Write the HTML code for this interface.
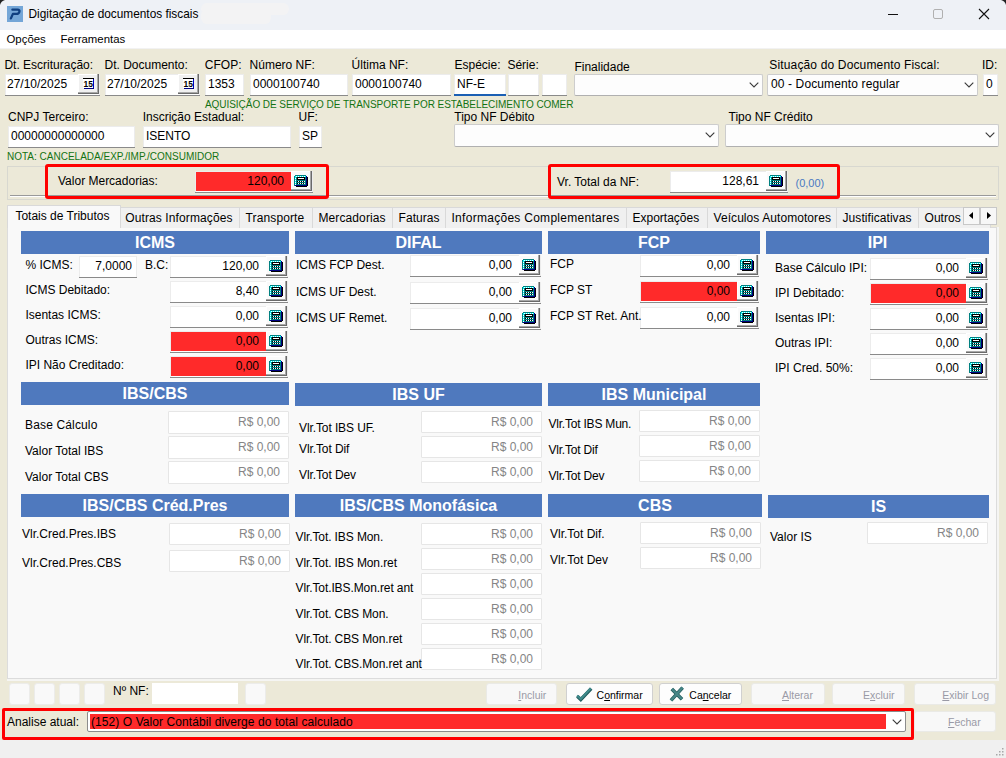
<!DOCTYPE html><html><head><meta charset="utf-8"><style>
html,body{margin:0;padding:0;}
body{width:1006px;height:758px;position:relative;overflow:hidden;background:#ece9d8;font-family:"Liberation Sans", sans-serif;}
.t{position:absolute;white-space:nowrap;line-height:1;z-index:2;}
.b{position:absolute;box-sizing:border-box;}
</style></head><body>
<div class="b" style="left:0px;top:0px;width:1006px;height:30px;background:#eef1f6;"></div>
<svg width="16" height="16" viewBox="0 0 16 16" style="position:absolute;left:7px;top:6px"><rect width="16" height="16" fill="#74a6d7"/><path d="M5.4 3.7 L10.6 3.7 Q12.9 3.7 12.4 5.7 Q11.9 7.9 9.5 7.9 L5.9 7.9 L3.9 12.4" fill="none" stroke="#0f3f80" stroke-width="2.3" stroke-linecap="round" stroke-linejoin="round"/></svg>
<div class="t" style="left:28.5px;top:8.97px;font-size:11.85px;color:#000;">Digitação de documentos fiscais</div>
<div class="b" style="left:201px;top:3px;width:88px;height:12px;background:#f3f3f4;border-radius:6px;filter:blur(0.6px);"></div>
<div class="b" style="left:201px;top:9px;width:70px;height:15px;background:#f3f3f4;border-radius:6px;filter:blur(0.6px);"></div>
<svg width="6" height="6" style="position:absolute;left:1000px;top:0"><path d="M1 0 L6 0 L6 5 Q5 1 1 0Z" fill="#222"/></svg>
<svg width="6" height="6" style="position:absolute;left:0;top:0"><path d="M5 0 L0 0 L0 5 Q1 1 5 0Z" fill="#222"/></svg>
<div class="b" style="left:888px;top:14px;width:10px;height:1px;background:#111;"></div>
<div class="b" style="left:933px;top:9px;width:10px;height:10px;border:1px solid #b0b0b0;border-radius:2px;"></div>
<svg width="12" height="12" viewBox="0 0 12 12" style="position:absolute;left:978px;top:8px"><path d="M1 1 L11 11 M11 1 L1 11" stroke="#111" stroke-width="1.1"/></svg>
<div class="b" style="left:0px;top:30px;width:1006px;height:18px;background:#fff;"></div>
<div class="b" style="left:0px;top:48px;width:1006px;height:1px;background:#f2f2f2;"></div>
<div class="t" style="left:6.5px;top:34.35px;font-size:11.4px;color:#000;">Opções</div>
<div class="t" style="left:60.6px;top:34.35px;font-size:11.4px;color:#000;">Ferramentas</div>
<div class="b" style="left:0px;top:740px;width:1006px;height:18px;background:#f0f0f0;"></div>
<svg width="8" height="8" viewBox="0 0 8 8" style="position:absolute;left:996px;top:748px"><g fill="#a8a8a8"><rect x="6" y="0" width="1.5" height="1.5"/><rect x="3" y="3" width="1.5" height="1.5"/><rect x="6" y="3" width="1.5" height="1.5"/><rect x="0" y="6" width="1.5" height="1.5"/><rect x="3" y="6" width="1.5" height="1.5"/><rect x="6" y="6" width="1.5" height="1.5"/></g></svg>
<div class="t" style="left:4.4px;top:58.84px;font-size:12px;color:#000;">Dt. Escrituração:</div>
<div class="t" style="left:104.5px;top:58.84px;font-size:12px;color:#000;">Dt. Documento:</div>
<div class="t" style="left:204.8px;top:58.84px;font-size:12px;color:#000;">CFOP:</div>
<div class="t" style="left:249.6px;top:58.84px;font-size:12px;color:#000;">Número NF:</div>
<div class="t" style="left:351.6px;top:58.84px;font-size:12px;color:#000;">Última NF:</div>
<div class="t" style="left:454.5px;top:58.84px;font-size:12px;color:#000;">Espécie:</div>
<div class="t" style="left:507.4px;top:58.84px;font-size:12px;color:#000;">Série:</div>
<div class="t" style="left:982px;top:58.84px;font-size:12px;color:#000;">ID:</div>
<div class="t" style="left:769.3px;top:58.84px;font-size:12px;color:#000;letter-spacing:0.15px">Situação do Documento Fiscal:</div>
<div class="t" style="left:574.4px;top:60.84px;font-size:12px;color:#000;">Finalidade</div>
<div class="b" style="left:5px;top:74px;width:95px;height:22px;background:#fff;box-shadow: inset 0 -1px 0 #8a8a8a, inset 0 1px 0 #ececec, inset 1px 0 0 #ececec, inset -1px 0 0 #ececec;"></div>
<div class="t" style="left:7px;top:77.84px;font-size:12px;color:#000;">27/10/2025</div>
<div class="b" style="left:78px;top:74px;width:21px;height:20px;background:#f0f0f0;box-shadow: inset -1px -1px 0 #6a6a6a, inset -2px -2px 0 #a8a8a8, inset 1px 1px 0 #fff;"></div>
<svg width="12" height="11" viewBox="0 0 12 11" shape-rendering="crispEdges" style="position:absolute;left:83px;top:78px"><rect x="0" y="1" width="11" height="9" fill="#fff"/><rect x="0" y="0" width="11" height="1" fill="#000"/><rect x="0" y="1" width="1" height="9" fill="#000" opacity="0.0"/><rect x="10" y="1" width="1" height="9" fill="#0000c0"/><rect x="1" y="10" width="10" height="1" fill="#000080"/>
<text x="5.2" y="8.6" font-family="Liberation Sans" font-size="8.5" font-weight="bold" text-anchor="middle" fill="#000" shape-rendering="auto">15</text></svg>
<div class="b" style="left:105px;top:74px;width:95px;height:22px;background:#fff;box-shadow: inset 0 -1px 0 #8a8a8a, inset 0 1px 0 #ececec, inset 1px 0 0 #ececec, inset -1px 0 0 #ececec;"></div>
<div class="t" style="left:107px;top:77.84px;font-size:12px;color:#000;">27/10/2025</div>
<div class="b" style="left:178px;top:74px;width:21px;height:20px;background:#f0f0f0;box-shadow: inset -1px -1px 0 #6a6a6a, inset -2px -2px 0 #a8a8a8, inset 1px 1px 0 #fff;"></div>
<svg width="12" height="11" viewBox="0 0 12 11" shape-rendering="crispEdges" style="position:absolute;left:183px;top:78px"><rect x="0" y="1" width="11" height="9" fill="#fff"/><rect x="0" y="0" width="11" height="1" fill="#000"/><rect x="0" y="1" width="1" height="9" fill="#000" opacity="0.0"/><rect x="10" y="1" width="1" height="9" fill="#0000c0"/><rect x="1" y="10" width="10" height="1" fill="#000080"/>
<text x="5.2" y="8.6" font-family="Liberation Sans" font-size="8.5" font-weight="bold" text-anchor="middle" fill="#000" shape-rendering="auto">15</text></svg>
<div class="b" style="left:205px;top:74px;width:39px;height:22px;background:#fff;box-shadow: inset 0 -1px 0 #8a8a8a, inset 0 1px 0 #ececec, inset 1px 0 0 #ececec, inset -1px 0 0 #ececec;"></div>
<div class="t" style="left:208px;top:77.84px;font-size:12px;color:#000;">1353</div>
<div class="b" style="left:250px;top:74px;width:98px;height:22px;background:#fff;box-shadow: inset 0 -1px 0 #8a8a8a, inset 0 1px 0 #ececec, inset 1px 0 0 #ececec, inset -1px 0 0 #ececec;"></div>
<div class="t" style="left:253px;top:77.84px;font-size:12px;color:#000;">0000100740</div>
<div class="b" style="left:352px;top:74px;width:99px;height:22px;background:#fff;box-shadow: inset 0 -1px 0 #8a8a8a, inset 0 1px 0 #ececec, inset 1px 0 0 #ececec, inset -1px 0 0 #ececec;"></div>
<div class="t" style="left:355px;top:77.84px;font-size:12px;color:#000;">0000100740</div>
<div class="b" style="left:454px;top:74px;width:52px;height:22px;background:#fff;box-shadow: inset 0 -1px 0 #8a8a8a, inset 0 1px 0 #ececec, inset 1px 0 0 #ececec, inset -1px 0 0 #ececec;"></div>
<div class="t" style="left:457px;top:77.84px;font-size:12px;color:#000;">NF-E</div>
<div class="b" style="left:454px;top:94px;width:52px;height:2px;background:#1a5fb4;"></div>
<div class="b" style="left:508px;top:74px;width:31px;height:22px;background:#fff;box-shadow: inset 0 -1px 0 #8a8a8a, inset 0 1px 0 #ececec, inset 1px 0 0 #ececec, inset -1px 0 0 #ececec;"></div>
<div class="b" style="left:542px;top:74px;width:25px;height:22px;background:#fff;box-shadow: inset 0 -1px 0 #8a8a8a, inset 0 1px 0 #ececec, inset 1px 0 0 #ececec, inset -1px 0 0 #ececec;"></div>
<div class="b" style="left:574px;top:74px;width:189px;height:22px;background:#fdfdfd;border:1px solid #cdcdcd;border-bottom-color:#b0b0b0;border-radius:2px"></div>
<svg width="10" height="6" viewBox="0 0 10 6" style="position:absolute;left:749px;top:82px"><path d="M0.7 0.7 L5 5 L9.3 0.7" fill="none" stroke="#3a3a3a" stroke-width="1.1"/></svg>
<div class="b" style="left:767px;top:74px;width:211px;height:22px;background:#fdfdfd;border:1px solid #cdcdcd;border-bottom-color:#b0b0b0;border-radius:2px"></div>
<svg width="10" height="6" viewBox="0 0 10 6" style="position:absolute;left:964px;top:82px"><path d="M0.7 0.7 L5 5 L9.3 0.7" fill="none" stroke="#3a3a3a" stroke-width="1.1"/></svg>
<div class="t" style="left:771px;top:77.84px;font-size:12px;color:#000;letter-spacing:0.12px">00 - Documento regular</div>
<div class="b" style="left:983px;top:74px;width:15px;height:22px;background:#fff;box-shadow: inset 0 -1px 0 #8a8a8a, inset 0 1px 0 #ececec, inset 1px 0 0 #ececec, inset -1px 0 0 #ececec;"></div>
<div class="t" style="left:986px;top:77.84px;font-size:12px;color:#000;">0</div>
<div class="t" style="left:205px;top:99.94px;font-size:10px;color:#137313;letter-spacing:-0.05px">AQUISIÇÃO DE SERVIÇO DE TRANSPORTE POR ESTABELECIMENTO COMER</div>
<div class="t" style="left:8px;top:110.84px;font-size:12px;color:#000;">CNPJ Terceiro:</div>
<div class="t" style="left:142.7px;top:110.84px;font-size:12px;color:#000;">Inscrição Estadual:</div>
<div class="t" style="left:298.6px;top:110.84px;font-size:12px;color:#000;">UF:</div>
<div class="t" style="left:454.3px;top:110.84px;font-size:12px;color:#000;">Tipo NF Débito</div>
<div class="t" style="left:728.5px;top:110.84px;font-size:12px;color:#000;">Tipo NF Crédito</div>
<div class="b" style="left:8px;top:126px;width:127px;height:22px;background:#fff;box-shadow: inset 0 -1px 0 #8a8a8a, inset 0 1px 0 #ececec, inset 1px 0 0 #ececec, inset -1px 0 0 #ececec;"></div>
<div class="t" style="left:11px;top:129.84px;font-size:12px;color:#000;">00000000000000</div>
<div class="b" style="left:143px;top:126px;width:148px;height:22px;background:#fff;box-shadow: inset 0 -1px 0 #8a8a8a, inset 0 1px 0 #ececec, inset 1px 0 0 #ececec, inset -1px 0 0 #ececec;"></div>
<div class="t" style="left:146px;top:129.84px;font-size:12px;color:#000;">ISENTO</div>
<div class="b" style="left:299px;top:126px;width:23px;height:22px;background:#fff;box-shadow: inset 0 -1px 0 #8a8a8a, inset 0 1px 0 #ececec, inset 1px 0 0 #ececec, inset -1px 0 0 #ececec;"></div>
<div class="t" style="left:302px;top:129.84px;font-size:12px;color:#000;">SP</div>
<div class="b" style="left:454px;top:124px;width:265px;height:23px;background:#fdfdfd;border:1px solid #cdcdcd;border-bottom-color:#b0b0b0;border-radius:2px"></div>
<svg width="10" height="6" viewBox="0 0 10 6" style="position:absolute;left:705px;top:132px"><path d="M0.7 0.7 L5 5 L9.3 0.7" fill="none" stroke="#3a3a3a" stroke-width="1.1"/></svg>
<div class="b" style="left:725px;top:124px;width:274px;height:23px;background:#fdfdfd;border:1px solid #cdcdcd;border-bottom-color:#b0b0b0;border-radius:2px"></div>
<svg width="10" height="6" viewBox="0 0 10 6" style="position:absolute;left:985px;top:132px"><path d="M0.7 0.7 L5 5 L9.3 0.7" fill="none" stroke="#3a3a3a" stroke-width="1.1"/></svg>
<div class="t" style="left:7px;top:152.03px;font-size:10px;color:#137313;">NOTA: CANCELADA/EXP./IMP./CONSUMIDOR</div>
<div class="b" style="left:7px;top:166px;width:992px;height:34px;border:1px solid #d8d8d0;"></div>
<div class="b" style="left:10px;top:195px;width:986px;height:1px;background:#9a9a9a;"></div>
<div class="b" style="left:10px;top:196px;width:986px;height:1px;background:#fff;"></div>
<div class="b" style="left:45px;top:164px;width:284px;height:35px;border:3px solid #ff0000;border-radius:3px;"></div>
<div class="t" style="left:58px;top:174.84px;font-size:12px;color:#000;">Valor Mercadorias:</div>
<div class="b" style="left:195px;top:171px;width:118px;height:22px;background:#fff;box-shadow: inset 0 -1px 0 #8a8a8a, inset 0 1px 0 #ececec, inset 1px 0 0 #ececec, inset -1px 0 0 #ececec;"></div>
<div class="b" style="left:196px;top:172px;width:95px;height:19px;background:#ff2a2a;"></div>
<div class="b" style="left:291px;top:171px;width:21px;height:20px;background:#fafafa;box-shadow: inset -1px -1px 0 #6a6a6a, inset -2px -2px 0 #a8a8a8, inset 1px 1px 0 #fff;"></div>
<svg width="14" height="12" viewBox="0 0 14 12" shape-rendering="crispEdges" style="position:absolute;left:294px;top:175px">
<rect x="1" y="0" width="11" height="1" fill="#008080"/>
<rect x="0" y="1" width="1" height="10" fill="#008080"/>
<rect x="1" y="1" width="12" height="10" fill="#008080"/>
<rect x="12" y="1" width="1" height="10" fill="#000080"/><rect x="13" y="2" width="1" height="9" fill="#000"/>
<rect x="1" y="10" width="12" height="1" fill="#000080"/><rect x="2" y="11" width="11" height="1" fill="#000"/>
<g fill="#00ffff"><rect x="1" y="1" width="11" height="1"/><rect x="1" y="1" width="1" height="9"/></g>
<g fill="#fff"><rect x="2" y="1" width="1" height="1"/><rect x="4" y="1" width="1" height="1"/><rect x="6" y="1" width="1" height="1"/><rect x="8" y="1" width="1" height="1"/><rect x="10" y="1" width="1" height="1"/><rect x="1" y="3" width="1" height="1"/><rect x="1" y="5" width="1" height="1"/><rect x="1" y="7" width="1" height="1"/><rect x="1" y="9" width="1" height="1"/></g>
<rect x="3" y="2" width="8" height="3" fill="#000"/><rect x="4" y="3" width="6" height="1" fill="#fff"/>
<rect x="3" y="6" width="8" height="1" fill="#000"/><rect x="3" y="8" width="8" height="1" fill="#000"/>
<g fill="#fff"><rect x="4" y="6" width="1" height="1"/><rect x="6" y="6" width="1" height="1"/><rect x="8" y="6" width="1" height="1"/><rect x="10" y="6" width="1" height="1"/><rect x="4" y="8" width="1" height="1"/><rect x="6" y="8" width="1" height="1"/><rect x="8" y="8" width="1" height="1"/><rect x="10" y="8" width="1" height="1"/></g>
</svg>
<div class="t" style="right:722px;top:174.84px;font-size:12px;color:#000;">120,00</div>
<div class="b" style="left:548px;top:164px;width:292px;height:35px;border:3px solid #ff0000;border-radius:3px;"></div>
<div class="t" style="left:557px;top:175.84px;font-size:12px;color:#000;">Vr. Total da NF:</div>
<div class="b" style="left:670px;top:171px;width:118px;height:22px;background:#fff;box-shadow: inset 0 -1px 0 #8a8a8a, inset 0 1px 0 #ececec, inset 1px 0 0 #ececec, inset -1px 0 0 #ececec;"></div>
<div class="b" style="left:766px;top:171px;width:21px;height:20px;background:#fafafa;box-shadow: inset -1px -1px 0 #6a6a6a, inset -2px -2px 0 #a8a8a8, inset 1px 1px 0 #fff;"></div>
<svg width="14" height="12" viewBox="0 0 14 12" shape-rendering="crispEdges" style="position:absolute;left:769px;top:175px">
<rect x="1" y="0" width="11" height="1" fill="#008080"/>
<rect x="0" y="1" width="1" height="10" fill="#008080"/>
<rect x="1" y="1" width="12" height="10" fill="#008080"/>
<rect x="12" y="1" width="1" height="10" fill="#000080"/><rect x="13" y="2" width="1" height="9" fill="#000"/>
<rect x="1" y="10" width="12" height="1" fill="#000080"/><rect x="2" y="11" width="11" height="1" fill="#000"/>
<g fill="#00ffff"><rect x="1" y="1" width="11" height="1"/><rect x="1" y="1" width="1" height="9"/></g>
<g fill="#fff"><rect x="2" y="1" width="1" height="1"/><rect x="4" y="1" width="1" height="1"/><rect x="6" y="1" width="1" height="1"/><rect x="8" y="1" width="1" height="1"/><rect x="10" y="1" width="1" height="1"/><rect x="1" y="3" width="1" height="1"/><rect x="1" y="5" width="1" height="1"/><rect x="1" y="7" width="1" height="1"/><rect x="1" y="9" width="1" height="1"/></g>
<rect x="3" y="2" width="8" height="3" fill="#000"/><rect x="4" y="3" width="6" height="1" fill="#fff"/>
<rect x="3" y="6" width="8" height="1" fill="#000"/><rect x="3" y="8" width="8" height="1" fill="#000"/>
<g fill="#fff"><rect x="4" y="6" width="1" height="1"/><rect x="6" y="6" width="1" height="1"/><rect x="8" y="6" width="1" height="1"/><rect x="10" y="6" width="1" height="1"/><rect x="4" y="8" width="1" height="1"/><rect x="6" y="8" width="1" height="1"/><rect x="8" y="8" width="1" height="1"/><rect x="10" y="8" width="1" height="1"/></g>
</svg>
<div class="t" style="right:247px;top:174.84px;font-size:12px;color:#000;">128,61</div>
<div class="t" style="left:795.5px;top:177.69px;font-size:11px;color:#4a79c2;">(0,00)</div>
<div class="b" style="left:7px;top:227px;width:992px;height:454px;background:#f5f5f3;"></div>
<div class="b" style="left:7px;top:227px;width:990px;height:452px;background:#f9f9f9;border:1px solid #dcdcdc;"></div>
<div class="b" style="left:120px;top:207px;width:120px;height:21px;background:#f0f0f0;border:1px solid #d9d9d9;border-bottom:none;"></div>
<div class="t" style="left:125.2px;top:211.84px;font-size:12px;color:#000;letter-spacing:0.117px">Outras Informações</div>
<div class="b" style="left:239px;top:207px;width:74px;height:21px;background:#f0f0f0;border:1px solid #d9d9d9;border-bottom:none;"></div>
<div class="t" style="left:245.5px;top:211.84px;font-size:12px;color:#000;letter-spacing:0.13px">Transporte</div>
<div class="b" style="left:312px;top:207px;width:81px;height:21px;background:#f0f0f0;border:1px solid #d9d9d9;border-bottom:none;"></div>
<div class="t" style="left:318.5px;top:211.84px;font-size:12px;color:#000;letter-spacing:0.1px">Mercadorias</div>
<div class="b" style="left:392px;top:207px;width:54px;height:21px;background:#f0f0f0;border:1px solid #d9d9d9;border-bottom:none;"></div>
<div class="t" style="left:398.5px;top:211.84px;font-size:12px;color:#000;letter-spacing:0.07px">Faturas</div>
<div class="b" style="left:445px;top:207px;width:182px;height:21px;background:#f0f0f0;border:1px solid #d9d9d9;border-bottom:none;"></div>
<div class="t" style="left:451.5px;top:211.84px;font-size:12px;color:#000;letter-spacing:0.28px">Informações Complementares</div>
<div class="b" style="left:626px;top:207px;width:82px;height:21px;background:#f0f0f0;border:1px solid #d9d9d9;border-bottom:none;"></div>
<div class="t" style="left:632.5px;top:211.84px;font-size:12px;color:#000;letter-spacing:0.0px">Exportações</div>
<div class="b" style="left:707px;top:207px;width:130px;height:21px;background:#f0f0f0;border:1px solid #d9d9d9;border-bottom:none;"></div>
<div class="t" style="left:713.5px;top:211.84px;font-size:12px;color:#000;letter-spacing:0.07px">Veículos Automotores</div>
<div class="b" style="left:836px;top:207px;width:83px;height:21px;background:#f0f0f0;border:1px solid #d9d9d9;border-bottom:none;"></div>
<div class="t" style="left:842.5px;top:211.84px;font-size:12px;color:#000;letter-spacing:0.07px">Justificativas</div>
<div class="b" style="left:918px;top:207px;width:73px;height:21px;background:#f0f0f0;border:1px solid #d9d9d9;border-bottom:none;"></div>
<div class="t" style="left:924.5px;top:211.84px;font-size:12px;color:#000;letter-spacing:0.05px">Outros</div>
<div class="b" style="left:7px;top:205px;width:114px;height:23px;background:#f9f9f9;border:1px solid #d9d9d9;border-bottom:none;"></div>
<div class="t" style="left:15.4px;top:209.84px;font-size:12px;color:#000;">Totais de Tributos</div>
<div class="b" style="left:963px;top:207px;width:17px;height:18px;background:#f7f7f7;border:1px solid #c8c8c8;"></div>
<div class="b" style="left:980px;top:207px;width:17px;height:18px;background:#f7f7f7;border:1px solid #c8c8c8;"></div>
<svg width="5" height="7" style="position:absolute;left:969px;top:212px"><path d="M4 0 L0 3.5 L4 7Z" fill="#000"/></svg>
<svg width="5" height="7" style="position:absolute;left:987px;top:212px"><path d="M0 0 L4 3.5 L0 7Z" fill="#000"/></svg>
<div class="b" style="left:21px;top:231px;width:268px;height:23px;background:#4f79be;"></div>
<div class="t" style="left:21px;width:268px;text-align:center;top:234.96px;font-size:16px;color:#fff;font-weight:bold;">ICMS</div>
<div class="b" style="left:295px;top:231px;width:247px;height:23px;background:#4f79be;"></div>
<div class="t" style="left:295px;width:247px;text-align:center;top:234.96px;font-size:16px;color:#fff;font-weight:bold;">DIFAL</div>
<div class="b" style="left:548px;top:231px;width:212px;height:23px;background:#4f79be;"></div>
<div class="t" style="left:548px;width:212px;text-align:center;top:234.96px;font-size:16px;color:#fff;font-weight:bold;">FCP</div>
<div class="b" style="left:766px;top:231px;width:223px;height:23px;background:#4f79be;"></div>
<div class="t" style="left:766px;width:223px;text-align:center;top:234.96px;font-size:16px;color:#fff;font-weight:bold;">IPI</div>
<div class="b" style="left:21px;top:382px;width:268px;height:23px;background:#4f79be;"></div>
<div class="t" style="left:21px;width:268px;text-align:center;top:385.96px;font-size:16px;color:#fff;font-weight:bold;">IBS/CBS</div>
<div class="b" style="left:295px;top:383px;width:247px;height:23px;background:#4f79be;"></div>
<div class="t" style="left:295px;width:247px;text-align:center;top:386.96px;font-size:16px;color:#fff;font-weight:bold;">IBS UF</div>
<div class="b" style="left:548px;top:383px;width:212px;height:23px;background:#4f79be;"></div>
<div class="t" style="left:548px;width:212px;text-align:center;top:386.96px;font-size:16px;color:#fff;font-weight:bold;">IBS Municipal</div>
<div class="b" style="left:21px;top:494px;width:268px;height:23px;background:#4f79be;"></div>
<div class="t" style="left:21px;width:268px;text-align:center;top:497.96px;font-size:16px;color:#fff;font-weight:bold;">IBS/CBS Créd.Pres</div>
<div class="b" style="left:295px;top:494px;width:247px;height:23px;background:#4f79be;"></div>
<div class="t" style="left:295px;width:247px;text-align:center;top:497.96px;font-size:16px;color:#fff;font-weight:bold;">IBS/CBS Monofásica</div>
<div class="b" style="left:548px;top:494px;width:214px;height:23px;background:#4f79be;"></div>
<div class="t" style="left:548px;width:214px;text-align:center;top:497.96px;font-size:16px;color:#fff;font-weight:bold;">CBS</div>
<div class="b" style="left:768px;top:495px;width:221px;height:23px;background:#4f79be;"></div>
<div class="t" style="left:768px;width:221px;text-align:center;top:498.96px;font-size:16px;color:#fff;font-weight:bold;">IS</div>
<div class="t" style="left:25.4px;top:258.84px;font-size:12px;color:#000;">% ICMS:</div>
<div class="b" style="left:79px;top:256px;width:58px;height:22px;background:#fff;box-shadow: inset 0 -1px 0 #8a8a8a, inset 0 1px 0 #ececec, inset 1px 0 0 #ececec, inset -1px 0 0 #ececec;"></div>
<div class="t" style="right:874px;top:259.84px;font-size:12px;color:#000;">7,0000</div>
<div class="t" style="left:145px;top:258.84px;font-size:12px;color:#000;">B.C:</div>
<div class="b" style="left:170px;top:256px;width:118px;height:22px;background:#fff;box-shadow: inset 0 -1px 0 #8a8a8a, inset 0 1px 0 #ececec, inset 1px 0 0 #ececec, inset -1px 0 0 #ececec;"></div>
<div class="b" style="left:266px;top:256px;width:21px;height:20px;background:#fafafa;box-shadow: inset -1px -1px 0 #6a6a6a, inset -2px -2px 0 #a8a8a8, inset 1px 1px 0 #fff;"></div>
<svg width="14" height="12" viewBox="0 0 14 12" shape-rendering="crispEdges" style="position:absolute;left:269px;top:260px">
<rect x="1" y="0" width="11" height="1" fill="#008080"/>
<rect x="0" y="1" width="1" height="10" fill="#008080"/>
<rect x="1" y="1" width="12" height="10" fill="#008080"/>
<rect x="12" y="1" width="1" height="10" fill="#000080"/><rect x="13" y="2" width="1" height="9" fill="#000"/>
<rect x="1" y="10" width="12" height="1" fill="#000080"/><rect x="2" y="11" width="11" height="1" fill="#000"/>
<g fill="#00ffff"><rect x="1" y="1" width="11" height="1"/><rect x="1" y="1" width="1" height="9"/></g>
<g fill="#fff"><rect x="2" y="1" width="1" height="1"/><rect x="4" y="1" width="1" height="1"/><rect x="6" y="1" width="1" height="1"/><rect x="8" y="1" width="1" height="1"/><rect x="10" y="1" width="1" height="1"/><rect x="1" y="3" width="1" height="1"/><rect x="1" y="5" width="1" height="1"/><rect x="1" y="7" width="1" height="1"/><rect x="1" y="9" width="1" height="1"/></g>
<rect x="3" y="2" width="8" height="3" fill="#000"/><rect x="4" y="3" width="6" height="1" fill="#fff"/>
<rect x="3" y="6" width="8" height="1" fill="#000"/><rect x="3" y="8" width="8" height="1" fill="#000"/>
<g fill="#fff"><rect x="4" y="6" width="1" height="1"/><rect x="6" y="6" width="1" height="1"/><rect x="8" y="6" width="1" height="1"/><rect x="10" y="6" width="1" height="1"/><rect x="4" y="8" width="1" height="1"/><rect x="6" y="8" width="1" height="1"/><rect x="8" y="8" width="1" height="1"/><rect x="10" y="8" width="1" height="1"/></g>
</svg>
<div class="t" style="right:747px;top:259.84px;font-size:12px;color:#000;">120,00</div>
<div class="t" style="left:25.4px;top:283.84px;font-size:12px;color:#000;">ICMS Debitado:</div>
<div class="b" style="left:170px;top:281px;width:118px;height:22px;background:#fff;box-shadow: inset 0 -1px 0 #8a8a8a, inset 0 1px 0 #ececec, inset 1px 0 0 #ececec, inset -1px 0 0 #ececec;"></div>
<div class="b" style="left:266px;top:281px;width:21px;height:20px;background:#fafafa;box-shadow: inset -1px -1px 0 #6a6a6a, inset -2px -2px 0 #a8a8a8, inset 1px 1px 0 #fff;"></div>
<svg width="14" height="12" viewBox="0 0 14 12" shape-rendering="crispEdges" style="position:absolute;left:269px;top:285px">
<rect x="1" y="0" width="11" height="1" fill="#008080"/>
<rect x="0" y="1" width="1" height="10" fill="#008080"/>
<rect x="1" y="1" width="12" height="10" fill="#008080"/>
<rect x="12" y="1" width="1" height="10" fill="#000080"/><rect x="13" y="2" width="1" height="9" fill="#000"/>
<rect x="1" y="10" width="12" height="1" fill="#000080"/><rect x="2" y="11" width="11" height="1" fill="#000"/>
<g fill="#00ffff"><rect x="1" y="1" width="11" height="1"/><rect x="1" y="1" width="1" height="9"/></g>
<g fill="#fff"><rect x="2" y="1" width="1" height="1"/><rect x="4" y="1" width="1" height="1"/><rect x="6" y="1" width="1" height="1"/><rect x="8" y="1" width="1" height="1"/><rect x="10" y="1" width="1" height="1"/><rect x="1" y="3" width="1" height="1"/><rect x="1" y="5" width="1" height="1"/><rect x="1" y="7" width="1" height="1"/><rect x="1" y="9" width="1" height="1"/></g>
<rect x="3" y="2" width="8" height="3" fill="#000"/><rect x="4" y="3" width="6" height="1" fill="#fff"/>
<rect x="3" y="6" width="8" height="1" fill="#000"/><rect x="3" y="8" width="8" height="1" fill="#000"/>
<g fill="#fff"><rect x="4" y="6" width="1" height="1"/><rect x="6" y="6" width="1" height="1"/><rect x="8" y="6" width="1" height="1"/><rect x="10" y="6" width="1" height="1"/><rect x="4" y="8" width="1" height="1"/><rect x="6" y="8" width="1" height="1"/><rect x="8" y="8" width="1" height="1"/><rect x="10" y="8" width="1" height="1"/></g>
</svg>
<div class="t" style="right:747px;top:284.84px;font-size:12px;color:#000;">8,40</div>
<div class="t" style="left:25.4px;top:308.84px;font-size:12px;color:#000;">Isentas ICMS:</div>
<div class="b" style="left:170px;top:306px;width:118px;height:22px;background:#fff;box-shadow: inset 0 -1px 0 #8a8a8a, inset 0 1px 0 #ececec, inset 1px 0 0 #ececec, inset -1px 0 0 #ececec;"></div>
<div class="b" style="left:266px;top:306px;width:21px;height:20px;background:#fafafa;box-shadow: inset -1px -1px 0 #6a6a6a, inset -2px -2px 0 #a8a8a8, inset 1px 1px 0 #fff;"></div>
<svg width="14" height="12" viewBox="0 0 14 12" shape-rendering="crispEdges" style="position:absolute;left:269px;top:310px">
<rect x="1" y="0" width="11" height="1" fill="#008080"/>
<rect x="0" y="1" width="1" height="10" fill="#008080"/>
<rect x="1" y="1" width="12" height="10" fill="#008080"/>
<rect x="12" y="1" width="1" height="10" fill="#000080"/><rect x="13" y="2" width="1" height="9" fill="#000"/>
<rect x="1" y="10" width="12" height="1" fill="#000080"/><rect x="2" y="11" width="11" height="1" fill="#000"/>
<g fill="#00ffff"><rect x="1" y="1" width="11" height="1"/><rect x="1" y="1" width="1" height="9"/></g>
<g fill="#fff"><rect x="2" y="1" width="1" height="1"/><rect x="4" y="1" width="1" height="1"/><rect x="6" y="1" width="1" height="1"/><rect x="8" y="1" width="1" height="1"/><rect x="10" y="1" width="1" height="1"/><rect x="1" y="3" width="1" height="1"/><rect x="1" y="5" width="1" height="1"/><rect x="1" y="7" width="1" height="1"/><rect x="1" y="9" width="1" height="1"/></g>
<rect x="3" y="2" width="8" height="3" fill="#000"/><rect x="4" y="3" width="6" height="1" fill="#fff"/>
<rect x="3" y="6" width="8" height="1" fill="#000"/><rect x="3" y="8" width="8" height="1" fill="#000"/>
<g fill="#fff"><rect x="4" y="6" width="1" height="1"/><rect x="6" y="6" width="1" height="1"/><rect x="8" y="6" width="1" height="1"/><rect x="10" y="6" width="1" height="1"/><rect x="4" y="8" width="1" height="1"/><rect x="6" y="8" width="1" height="1"/><rect x="8" y="8" width="1" height="1"/><rect x="10" y="8" width="1" height="1"/></g>
</svg>
<div class="t" style="right:747px;top:309.84px;font-size:12px;color:#000;">0,00</div>
<div class="t" style="left:25.4px;top:333.84px;font-size:12px;color:#000;">Outras ICMS:</div>
<div class="b" style="left:170px;top:331px;width:118px;height:22px;background:#fff;box-shadow: inset 0 -1px 0 #8a8a8a, inset 0 1px 0 #ececec, inset 1px 0 0 #ececec, inset -1px 0 0 #ececec;"></div>
<div class="b" style="left:171px;top:332px;width:95px;height:19px;background:#ff2a2a;"></div>
<div class="b" style="left:266px;top:331px;width:21px;height:20px;background:#fafafa;box-shadow: inset -1px -1px 0 #6a6a6a, inset -2px -2px 0 #a8a8a8, inset 1px 1px 0 #fff;"></div>
<svg width="14" height="12" viewBox="0 0 14 12" shape-rendering="crispEdges" style="position:absolute;left:269px;top:335px">
<rect x="1" y="0" width="11" height="1" fill="#008080"/>
<rect x="0" y="1" width="1" height="10" fill="#008080"/>
<rect x="1" y="1" width="12" height="10" fill="#008080"/>
<rect x="12" y="1" width="1" height="10" fill="#000080"/><rect x="13" y="2" width="1" height="9" fill="#000"/>
<rect x="1" y="10" width="12" height="1" fill="#000080"/><rect x="2" y="11" width="11" height="1" fill="#000"/>
<g fill="#00ffff"><rect x="1" y="1" width="11" height="1"/><rect x="1" y="1" width="1" height="9"/></g>
<g fill="#fff"><rect x="2" y="1" width="1" height="1"/><rect x="4" y="1" width="1" height="1"/><rect x="6" y="1" width="1" height="1"/><rect x="8" y="1" width="1" height="1"/><rect x="10" y="1" width="1" height="1"/><rect x="1" y="3" width="1" height="1"/><rect x="1" y="5" width="1" height="1"/><rect x="1" y="7" width="1" height="1"/><rect x="1" y="9" width="1" height="1"/></g>
<rect x="3" y="2" width="8" height="3" fill="#000"/><rect x="4" y="3" width="6" height="1" fill="#fff"/>
<rect x="3" y="6" width="8" height="1" fill="#000"/><rect x="3" y="8" width="8" height="1" fill="#000"/>
<g fill="#fff"><rect x="4" y="6" width="1" height="1"/><rect x="6" y="6" width="1" height="1"/><rect x="8" y="6" width="1" height="1"/><rect x="10" y="6" width="1" height="1"/><rect x="4" y="8" width="1" height="1"/><rect x="6" y="8" width="1" height="1"/><rect x="8" y="8" width="1" height="1"/><rect x="10" y="8" width="1" height="1"/></g>
</svg>
<div class="t" style="right:747px;top:334.84px;font-size:12px;color:#000;">0,00</div>
<div class="t" style="left:25.4px;top:358.84px;font-size:12px;color:#000;">IPI Não Creditado:</div>
<div class="b" style="left:170px;top:356px;width:118px;height:22px;background:#fff;box-shadow: inset 0 -1px 0 #8a8a8a, inset 0 1px 0 #ececec, inset 1px 0 0 #ececec, inset -1px 0 0 #ececec;"></div>
<div class="b" style="left:171px;top:357px;width:95px;height:19px;background:#ff2a2a;"></div>
<div class="b" style="left:266px;top:356px;width:21px;height:20px;background:#fafafa;box-shadow: inset -1px -1px 0 #6a6a6a, inset -2px -2px 0 #a8a8a8, inset 1px 1px 0 #fff;"></div>
<svg width="14" height="12" viewBox="0 0 14 12" shape-rendering="crispEdges" style="position:absolute;left:269px;top:360px">
<rect x="1" y="0" width="11" height="1" fill="#008080"/>
<rect x="0" y="1" width="1" height="10" fill="#008080"/>
<rect x="1" y="1" width="12" height="10" fill="#008080"/>
<rect x="12" y="1" width="1" height="10" fill="#000080"/><rect x="13" y="2" width="1" height="9" fill="#000"/>
<rect x="1" y="10" width="12" height="1" fill="#000080"/><rect x="2" y="11" width="11" height="1" fill="#000"/>
<g fill="#00ffff"><rect x="1" y="1" width="11" height="1"/><rect x="1" y="1" width="1" height="9"/></g>
<g fill="#fff"><rect x="2" y="1" width="1" height="1"/><rect x="4" y="1" width="1" height="1"/><rect x="6" y="1" width="1" height="1"/><rect x="8" y="1" width="1" height="1"/><rect x="10" y="1" width="1" height="1"/><rect x="1" y="3" width="1" height="1"/><rect x="1" y="5" width="1" height="1"/><rect x="1" y="7" width="1" height="1"/><rect x="1" y="9" width="1" height="1"/></g>
<rect x="3" y="2" width="8" height="3" fill="#000"/><rect x="4" y="3" width="6" height="1" fill="#fff"/>
<rect x="3" y="6" width="8" height="1" fill="#000"/><rect x="3" y="8" width="8" height="1" fill="#000"/>
<g fill="#fff"><rect x="4" y="6" width="1" height="1"/><rect x="6" y="6" width="1" height="1"/><rect x="8" y="6" width="1" height="1"/><rect x="10" y="6" width="1" height="1"/><rect x="4" y="8" width="1" height="1"/><rect x="6" y="8" width="1" height="1"/><rect x="8" y="8" width="1" height="1"/><rect x="10" y="8" width="1" height="1"/></g>
</svg>
<div class="t" style="right:747px;top:359.84px;font-size:12px;color:#000;">0,00</div>
<div class="t" style="left:296px;top:258.84px;font-size:12px;color:#000;">ICMS FCP Dest.</div>
<div class="b" style="left:410px;top:255px;width:131px;height:22px;background:#fff;box-shadow: inset 0 -1px 0 #8a8a8a, inset 0 1px 0 #ececec, inset 1px 0 0 #ececec, inset -1px 0 0 #ececec;"></div>
<div class="b" style="left:519px;top:255px;width:21px;height:20px;background:#fafafa;box-shadow: inset -1px -1px 0 #6a6a6a, inset -2px -2px 0 #a8a8a8, inset 1px 1px 0 #fff;"></div>
<svg width="14" height="12" viewBox="0 0 14 12" shape-rendering="crispEdges" style="position:absolute;left:522px;top:259px">
<rect x="1" y="0" width="11" height="1" fill="#008080"/>
<rect x="0" y="1" width="1" height="10" fill="#008080"/>
<rect x="1" y="1" width="12" height="10" fill="#008080"/>
<rect x="12" y="1" width="1" height="10" fill="#000080"/><rect x="13" y="2" width="1" height="9" fill="#000"/>
<rect x="1" y="10" width="12" height="1" fill="#000080"/><rect x="2" y="11" width="11" height="1" fill="#000"/>
<g fill="#00ffff"><rect x="1" y="1" width="11" height="1"/><rect x="1" y="1" width="1" height="9"/></g>
<g fill="#fff"><rect x="2" y="1" width="1" height="1"/><rect x="4" y="1" width="1" height="1"/><rect x="6" y="1" width="1" height="1"/><rect x="8" y="1" width="1" height="1"/><rect x="10" y="1" width="1" height="1"/><rect x="1" y="3" width="1" height="1"/><rect x="1" y="5" width="1" height="1"/><rect x="1" y="7" width="1" height="1"/><rect x="1" y="9" width="1" height="1"/></g>
<rect x="3" y="2" width="8" height="3" fill="#000"/><rect x="4" y="3" width="6" height="1" fill="#fff"/>
<rect x="3" y="6" width="8" height="1" fill="#000"/><rect x="3" y="8" width="8" height="1" fill="#000"/>
<g fill="#fff"><rect x="4" y="6" width="1" height="1"/><rect x="6" y="6" width="1" height="1"/><rect x="8" y="6" width="1" height="1"/><rect x="10" y="6" width="1" height="1"/><rect x="4" y="8" width="1" height="1"/><rect x="6" y="8" width="1" height="1"/><rect x="8" y="8" width="1" height="1"/><rect x="10" y="8" width="1" height="1"/></g>
</svg>
<div class="t" style="right:494px;top:258.84px;font-size:12px;color:#000;">0,00</div>
<div class="t" style="left:296px;top:285.84px;font-size:12px;color:#000;">ICMS UF Dest.</div>
<div class="b" style="left:410px;top:282px;width:131px;height:22px;background:#fff;box-shadow: inset 0 -1px 0 #8a8a8a, inset 0 1px 0 #ececec, inset 1px 0 0 #ececec, inset -1px 0 0 #ececec;"></div>
<div class="b" style="left:519px;top:282px;width:21px;height:20px;background:#fafafa;box-shadow: inset -1px -1px 0 #6a6a6a, inset -2px -2px 0 #a8a8a8, inset 1px 1px 0 #fff;"></div>
<svg width="14" height="12" viewBox="0 0 14 12" shape-rendering="crispEdges" style="position:absolute;left:522px;top:286px">
<rect x="1" y="0" width="11" height="1" fill="#008080"/>
<rect x="0" y="1" width="1" height="10" fill="#008080"/>
<rect x="1" y="1" width="12" height="10" fill="#008080"/>
<rect x="12" y="1" width="1" height="10" fill="#000080"/><rect x="13" y="2" width="1" height="9" fill="#000"/>
<rect x="1" y="10" width="12" height="1" fill="#000080"/><rect x="2" y="11" width="11" height="1" fill="#000"/>
<g fill="#00ffff"><rect x="1" y="1" width="11" height="1"/><rect x="1" y="1" width="1" height="9"/></g>
<g fill="#fff"><rect x="2" y="1" width="1" height="1"/><rect x="4" y="1" width="1" height="1"/><rect x="6" y="1" width="1" height="1"/><rect x="8" y="1" width="1" height="1"/><rect x="10" y="1" width="1" height="1"/><rect x="1" y="3" width="1" height="1"/><rect x="1" y="5" width="1" height="1"/><rect x="1" y="7" width="1" height="1"/><rect x="1" y="9" width="1" height="1"/></g>
<rect x="3" y="2" width="8" height="3" fill="#000"/><rect x="4" y="3" width="6" height="1" fill="#fff"/>
<rect x="3" y="6" width="8" height="1" fill="#000"/><rect x="3" y="8" width="8" height="1" fill="#000"/>
<g fill="#fff"><rect x="4" y="6" width="1" height="1"/><rect x="6" y="6" width="1" height="1"/><rect x="8" y="6" width="1" height="1"/><rect x="10" y="6" width="1" height="1"/><rect x="4" y="8" width="1" height="1"/><rect x="6" y="8" width="1" height="1"/><rect x="8" y="8" width="1" height="1"/><rect x="10" y="8" width="1" height="1"/></g>
</svg>
<div class="t" style="right:494px;top:285.84px;font-size:12px;color:#000;">0,00</div>
<div class="t" style="left:296px;top:311.84px;font-size:12px;color:#000;">ICMS UF Remet.</div>
<div class="b" style="left:410px;top:308px;width:131px;height:22px;background:#fff;box-shadow: inset 0 -1px 0 #8a8a8a, inset 0 1px 0 #ececec, inset 1px 0 0 #ececec, inset -1px 0 0 #ececec;"></div>
<div class="b" style="left:519px;top:308px;width:21px;height:20px;background:#fafafa;box-shadow: inset -1px -1px 0 #6a6a6a, inset -2px -2px 0 #a8a8a8, inset 1px 1px 0 #fff;"></div>
<svg width="14" height="12" viewBox="0 0 14 12" shape-rendering="crispEdges" style="position:absolute;left:522px;top:312px">
<rect x="1" y="0" width="11" height="1" fill="#008080"/>
<rect x="0" y="1" width="1" height="10" fill="#008080"/>
<rect x="1" y="1" width="12" height="10" fill="#008080"/>
<rect x="12" y="1" width="1" height="10" fill="#000080"/><rect x="13" y="2" width="1" height="9" fill="#000"/>
<rect x="1" y="10" width="12" height="1" fill="#000080"/><rect x="2" y="11" width="11" height="1" fill="#000"/>
<g fill="#00ffff"><rect x="1" y="1" width="11" height="1"/><rect x="1" y="1" width="1" height="9"/></g>
<g fill="#fff"><rect x="2" y="1" width="1" height="1"/><rect x="4" y="1" width="1" height="1"/><rect x="6" y="1" width="1" height="1"/><rect x="8" y="1" width="1" height="1"/><rect x="10" y="1" width="1" height="1"/><rect x="1" y="3" width="1" height="1"/><rect x="1" y="5" width="1" height="1"/><rect x="1" y="7" width="1" height="1"/><rect x="1" y="9" width="1" height="1"/></g>
<rect x="3" y="2" width="8" height="3" fill="#000"/><rect x="4" y="3" width="6" height="1" fill="#fff"/>
<rect x="3" y="6" width="8" height="1" fill="#000"/><rect x="3" y="8" width="8" height="1" fill="#000"/>
<g fill="#fff"><rect x="4" y="6" width="1" height="1"/><rect x="6" y="6" width="1" height="1"/><rect x="8" y="6" width="1" height="1"/><rect x="10" y="6" width="1" height="1"/><rect x="4" y="8" width="1" height="1"/><rect x="6" y="8" width="1" height="1"/><rect x="8" y="8" width="1" height="1"/><rect x="10" y="8" width="1" height="1"/></g>
</svg>
<div class="t" style="right:494px;top:311.84px;font-size:12px;color:#000;">0,00</div>
<div class="t" style="left:550px;top:257.84px;font-size:12px;color:#000;">FCP</div>
<div class="b" style="left:640px;top:255px;width:119px;height:22px;background:#fff;box-shadow: inset 0 -1px 0 #8a8a8a, inset 0 1px 0 #ececec, inset 1px 0 0 #ececec, inset -1px 0 0 #ececec;"></div>
<div class="b" style="left:737px;top:255px;width:21px;height:20px;background:#fafafa;box-shadow: inset -1px -1px 0 #6a6a6a, inset -2px -2px 0 #a8a8a8, inset 1px 1px 0 #fff;"></div>
<svg width="14" height="12" viewBox="0 0 14 12" shape-rendering="crispEdges" style="position:absolute;left:740px;top:259px">
<rect x="1" y="0" width="11" height="1" fill="#008080"/>
<rect x="0" y="1" width="1" height="10" fill="#008080"/>
<rect x="1" y="1" width="12" height="10" fill="#008080"/>
<rect x="12" y="1" width="1" height="10" fill="#000080"/><rect x="13" y="2" width="1" height="9" fill="#000"/>
<rect x="1" y="10" width="12" height="1" fill="#000080"/><rect x="2" y="11" width="11" height="1" fill="#000"/>
<g fill="#00ffff"><rect x="1" y="1" width="11" height="1"/><rect x="1" y="1" width="1" height="9"/></g>
<g fill="#fff"><rect x="2" y="1" width="1" height="1"/><rect x="4" y="1" width="1" height="1"/><rect x="6" y="1" width="1" height="1"/><rect x="8" y="1" width="1" height="1"/><rect x="10" y="1" width="1" height="1"/><rect x="1" y="3" width="1" height="1"/><rect x="1" y="5" width="1" height="1"/><rect x="1" y="7" width="1" height="1"/><rect x="1" y="9" width="1" height="1"/></g>
<rect x="3" y="2" width="8" height="3" fill="#000"/><rect x="4" y="3" width="6" height="1" fill="#fff"/>
<rect x="3" y="6" width="8" height="1" fill="#000"/><rect x="3" y="8" width="8" height="1" fill="#000"/>
<g fill="#fff"><rect x="4" y="6" width="1" height="1"/><rect x="6" y="6" width="1" height="1"/><rect x="8" y="6" width="1" height="1"/><rect x="10" y="6" width="1" height="1"/><rect x="4" y="8" width="1" height="1"/><rect x="6" y="8" width="1" height="1"/><rect x="8" y="8" width="1" height="1"/><rect x="10" y="8" width="1" height="1"/></g>
</svg>
<div class="t" style="right:276px;top:258.84px;font-size:12px;color:#000;">0,00</div>
<div class="t" style="left:550px;top:283.84px;font-size:12px;color:#000;">FCP ST</div>
<div class="b" style="left:640px;top:281px;width:119px;height:22px;background:#fff;box-shadow: inset 0 -1px 0 #8a8a8a, inset 0 1px 0 #ececec, inset 1px 0 0 #ececec, inset -1px 0 0 #ececec;"></div>
<div class="b" style="left:641px;top:282px;width:96px;height:19px;background:#ff2a2a;"></div>
<div class="b" style="left:737px;top:281px;width:21px;height:20px;background:#fafafa;box-shadow: inset -1px -1px 0 #6a6a6a, inset -2px -2px 0 #a8a8a8, inset 1px 1px 0 #fff;"></div>
<svg width="14" height="12" viewBox="0 0 14 12" shape-rendering="crispEdges" style="position:absolute;left:740px;top:285px">
<rect x="1" y="0" width="11" height="1" fill="#008080"/>
<rect x="0" y="1" width="1" height="10" fill="#008080"/>
<rect x="1" y="1" width="12" height="10" fill="#008080"/>
<rect x="12" y="1" width="1" height="10" fill="#000080"/><rect x="13" y="2" width="1" height="9" fill="#000"/>
<rect x="1" y="10" width="12" height="1" fill="#000080"/><rect x="2" y="11" width="11" height="1" fill="#000"/>
<g fill="#00ffff"><rect x="1" y="1" width="11" height="1"/><rect x="1" y="1" width="1" height="9"/></g>
<g fill="#fff"><rect x="2" y="1" width="1" height="1"/><rect x="4" y="1" width="1" height="1"/><rect x="6" y="1" width="1" height="1"/><rect x="8" y="1" width="1" height="1"/><rect x="10" y="1" width="1" height="1"/><rect x="1" y="3" width="1" height="1"/><rect x="1" y="5" width="1" height="1"/><rect x="1" y="7" width="1" height="1"/><rect x="1" y="9" width="1" height="1"/></g>
<rect x="3" y="2" width="8" height="3" fill="#000"/><rect x="4" y="3" width="6" height="1" fill="#fff"/>
<rect x="3" y="6" width="8" height="1" fill="#000"/><rect x="3" y="8" width="8" height="1" fill="#000"/>
<g fill="#fff"><rect x="4" y="6" width="1" height="1"/><rect x="6" y="6" width="1" height="1"/><rect x="8" y="6" width="1" height="1"/><rect x="10" y="6" width="1" height="1"/><rect x="4" y="8" width="1" height="1"/><rect x="6" y="8" width="1" height="1"/><rect x="8" y="8" width="1" height="1"/><rect x="10" y="8" width="1" height="1"/></g>
</svg>
<div class="t" style="right:276px;top:284.84px;font-size:12px;color:#000;">0,00</div>
<div class="t" style="left:550px;top:309.84px;font-size:12px;color:#000;">FCP ST Ret. Ant.</div>
<div class="b" style="left:640px;top:307px;width:119px;height:22px;background:#fff;box-shadow: inset 0 -1px 0 #8a8a8a, inset 0 1px 0 #ececec, inset 1px 0 0 #ececec, inset -1px 0 0 #ececec;"></div>
<div class="b" style="left:737px;top:307px;width:21px;height:20px;background:#fafafa;box-shadow: inset -1px -1px 0 #6a6a6a, inset -2px -2px 0 #a8a8a8, inset 1px 1px 0 #fff;"></div>
<svg width="14" height="12" viewBox="0 0 14 12" shape-rendering="crispEdges" style="position:absolute;left:740px;top:311px">
<rect x="1" y="0" width="11" height="1" fill="#008080"/>
<rect x="0" y="1" width="1" height="10" fill="#008080"/>
<rect x="1" y="1" width="12" height="10" fill="#008080"/>
<rect x="12" y="1" width="1" height="10" fill="#000080"/><rect x="13" y="2" width="1" height="9" fill="#000"/>
<rect x="1" y="10" width="12" height="1" fill="#000080"/><rect x="2" y="11" width="11" height="1" fill="#000"/>
<g fill="#00ffff"><rect x="1" y="1" width="11" height="1"/><rect x="1" y="1" width="1" height="9"/></g>
<g fill="#fff"><rect x="2" y="1" width="1" height="1"/><rect x="4" y="1" width="1" height="1"/><rect x="6" y="1" width="1" height="1"/><rect x="8" y="1" width="1" height="1"/><rect x="10" y="1" width="1" height="1"/><rect x="1" y="3" width="1" height="1"/><rect x="1" y="5" width="1" height="1"/><rect x="1" y="7" width="1" height="1"/><rect x="1" y="9" width="1" height="1"/></g>
<rect x="3" y="2" width="8" height="3" fill="#000"/><rect x="4" y="3" width="6" height="1" fill="#fff"/>
<rect x="3" y="6" width="8" height="1" fill="#000"/><rect x="3" y="8" width="8" height="1" fill="#000"/>
<g fill="#fff"><rect x="4" y="6" width="1" height="1"/><rect x="6" y="6" width="1" height="1"/><rect x="8" y="6" width="1" height="1"/><rect x="10" y="6" width="1" height="1"/><rect x="4" y="8" width="1" height="1"/><rect x="6" y="8" width="1" height="1"/><rect x="8" y="8" width="1" height="1"/><rect x="10" y="8" width="1" height="1"/></g>
</svg>
<div class="t" style="right:276px;top:310.84px;font-size:12px;color:#000;">0,00</div>
<div class="t" style="left:775px;top:261.84px;font-size:12px;color:#000;">Base Cálculo IPI:</div>
<div class="b" style="left:870px;top:258px;width:118px;height:22px;background:#fff;box-shadow: inset 0 -1px 0 #8a8a8a, inset 0 1px 0 #ececec, inset 1px 0 0 #ececec, inset -1px 0 0 #ececec;"></div>
<div class="b" style="left:966px;top:258px;width:21px;height:20px;background:#fafafa;box-shadow: inset -1px -1px 0 #6a6a6a, inset -2px -2px 0 #a8a8a8, inset 1px 1px 0 #fff;"></div>
<svg width="14" height="12" viewBox="0 0 14 12" shape-rendering="crispEdges" style="position:absolute;left:969px;top:262px">
<rect x="1" y="0" width="11" height="1" fill="#008080"/>
<rect x="0" y="1" width="1" height="10" fill="#008080"/>
<rect x="1" y="1" width="12" height="10" fill="#008080"/>
<rect x="12" y="1" width="1" height="10" fill="#000080"/><rect x="13" y="2" width="1" height="9" fill="#000"/>
<rect x="1" y="10" width="12" height="1" fill="#000080"/><rect x="2" y="11" width="11" height="1" fill="#000"/>
<g fill="#00ffff"><rect x="1" y="1" width="11" height="1"/><rect x="1" y="1" width="1" height="9"/></g>
<g fill="#fff"><rect x="2" y="1" width="1" height="1"/><rect x="4" y="1" width="1" height="1"/><rect x="6" y="1" width="1" height="1"/><rect x="8" y="1" width="1" height="1"/><rect x="10" y="1" width="1" height="1"/><rect x="1" y="3" width="1" height="1"/><rect x="1" y="5" width="1" height="1"/><rect x="1" y="7" width="1" height="1"/><rect x="1" y="9" width="1" height="1"/></g>
<rect x="3" y="2" width="8" height="3" fill="#000"/><rect x="4" y="3" width="6" height="1" fill="#fff"/>
<rect x="3" y="6" width="8" height="1" fill="#000"/><rect x="3" y="8" width="8" height="1" fill="#000"/>
<g fill="#fff"><rect x="4" y="6" width="1" height="1"/><rect x="6" y="6" width="1" height="1"/><rect x="8" y="6" width="1" height="1"/><rect x="10" y="6" width="1" height="1"/><rect x="4" y="8" width="1" height="1"/><rect x="6" y="8" width="1" height="1"/><rect x="8" y="8" width="1" height="1"/><rect x="10" y="8" width="1" height="1"/></g>
</svg>
<div class="t" style="right:47px;top:261.84px;font-size:12px;color:#000;">0,00</div>
<div class="t" style="left:775px;top:286.84px;font-size:12px;color:#000;">IPI Debitado:</div>
<div class="b" style="left:870px;top:283px;width:118px;height:22px;background:#fff;box-shadow: inset 0 -1px 0 #8a8a8a, inset 0 1px 0 #ececec, inset 1px 0 0 #ececec, inset -1px 0 0 #ececec;"></div>
<div class="b" style="left:871px;top:284px;width:95px;height:19px;background:#ff2a2a;"></div>
<div class="b" style="left:966px;top:283px;width:21px;height:20px;background:#fafafa;box-shadow: inset -1px -1px 0 #6a6a6a, inset -2px -2px 0 #a8a8a8, inset 1px 1px 0 #fff;"></div>
<svg width="14" height="12" viewBox="0 0 14 12" shape-rendering="crispEdges" style="position:absolute;left:969px;top:287px">
<rect x="1" y="0" width="11" height="1" fill="#008080"/>
<rect x="0" y="1" width="1" height="10" fill="#008080"/>
<rect x="1" y="1" width="12" height="10" fill="#008080"/>
<rect x="12" y="1" width="1" height="10" fill="#000080"/><rect x="13" y="2" width="1" height="9" fill="#000"/>
<rect x="1" y="10" width="12" height="1" fill="#000080"/><rect x="2" y="11" width="11" height="1" fill="#000"/>
<g fill="#00ffff"><rect x="1" y="1" width="11" height="1"/><rect x="1" y="1" width="1" height="9"/></g>
<g fill="#fff"><rect x="2" y="1" width="1" height="1"/><rect x="4" y="1" width="1" height="1"/><rect x="6" y="1" width="1" height="1"/><rect x="8" y="1" width="1" height="1"/><rect x="10" y="1" width="1" height="1"/><rect x="1" y="3" width="1" height="1"/><rect x="1" y="5" width="1" height="1"/><rect x="1" y="7" width="1" height="1"/><rect x="1" y="9" width="1" height="1"/></g>
<rect x="3" y="2" width="8" height="3" fill="#000"/><rect x="4" y="3" width="6" height="1" fill="#fff"/>
<rect x="3" y="6" width="8" height="1" fill="#000"/><rect x="3" y="8" width="8" height="1" fill="#000"/>
<g fill="#fff"><rect x="4" y="6" width="1" height="1"/><rect x="6" y="6" width="1" height="1"/><rect x="8" y="6" width="1" height="1"/><rect x="10" y="6" width="1" height="1"/><rect x="4" y="8" width="1" height="1"/><rect x="6" y="8" width="1" height="1"/><rect x="8" y="8" width="1" height="1"/><rect x="10" y="8" width="1" height="1"/></g>
</svg>
<div class="t" style="right:47px;top:286.84px;font-size:12px;color:#000;">0,00</div>
<div class="t" style="left:775px;top:311.84px;font-size:12px;color:#000;">Isentas IPI:</div>
<div class="b" style="left:870px;top:308px;width:118px;height:22px;background:#fff;box-shadow: inset 0 -1px 0 #8a8a8a, inset 0 1px 0 #ececec, inset 1px 0 0 #ececec, inset -1px 0 0 #ececec;"></div>
<div class="b" style="left:966px;top:308px;width:21px;height:20px;background:#fafafa;box-shadow: inset -1px -1px 0 #6a6a6a, inset -2px -2px 0 #a8a8a8, inset 1px 1px 0 #fff;"></div>
<svg width="14" height="12" viewBox="0 0 14 12" shape-rendering="crispEdges" style="position:absolute;left:969px;top:312px">
<rect x="1" y="0" width="11" height="1" fill="#008080"/>
<rect x="0" y="1" width="1" height="10" fill="#008080"/>
<rect x="1" y="1" width="12" height="10" fill="#008080"/>
<rect x="12" y="1" width="1" height="10" fill="#000080"/><rect x="13" y="2" width="1" height="9" fill="#000"/>
<rect x="1" y="10" width="12" height="1" fill="#000080"/><rect x="2" y="11" width="11" height="1" fill="#000"/>
<g fill="#00ffff"><rect x="1" y="1" width="11" height="1"/><rect x="1" y="1" width="1" height="9"/></g>
<g fill="#fff"><rect x="2" y="1" width="1" height="1"/><rect x="4" y="1" width="1" height="1"/><rect x="6" y="1" width="1" height="1"/><rect x="8" y="1" width="1" height="1"/><rect x="10" y="1" width="1" height="1"/><rect x="1" y="3" width="1" height="1"/><rect x="1" y="5" width="1" height="1"/><rect x="1" y="7" width="1" height="1"/><rect x="1" y="9" width="1" height="1"/></g>
<rect x="3" y="2" width="8" height="3" fill="#000"/><rect x="4" y="3" width="6" height="1" fill="#fff"/>
<rect x="3" y="6" width="8" height="1" fill="#000"/><rect x="3" y="8" width="8" height="1" fill="#000"/>
<g fill="#fff"><rect x="4" y="6" width="1" height="1"/><rect x="6" y="6" width="1" height="1"/><rect x="8" y="6" width="1" height="1"/><rect x="10" y="6" width="1" height="1"/><rect x="4" y="8" width="1" height="1"/><rect x="6" y="8" width="1" height="1"/><rect x="8" y="8" width="1" height="1"/><rect x="10" y="8" width="1" height="1"/></g>
</svg>
<div class="t" style="right:47px;top:311.84px;font-size:12px;color:#000;">0,00</div>
<div class="t" style="left:775px;top:336.84px;font-size:12px;color:#000;">Outras IPI:</div>
<div class="b" style="left:870px;top:333px;width:118px;height:22px;background:#fff;box-shadow: inset 0 -1px 0 #8a8a8a, inset 0 1px 0 #ececec, inset 1px 0 0 #ececec, inset -1px 0 0 #ececec;"></div>
<div class="b" style="left:966px;top:333px;width:21px;height:20px;background:#fafafa;box-shadow: inset -1px -1px 0 #6a6a6a, inset -2px -2px 0 #a8a8a8, inset 1px 1px 0 #fff;"></div>
<svg width="14" height="12" viewBox="0 0 14 12" shape-rendering="crispEdges" style="position:absolute;left:969px;top:337px">
<rect x="1" y="0" width="11" height="1" fill="#008080"/>
<rect x="0" y="1" width="1" height="10" fill="#008080"/>
<rect x="1" y="1" width="12" height="10" fill="#008080"/>
<rect x="12" y="1" width="1" height="10" fill="#000080"/><rect x="13" y="2" width="1" height="9" fill="#000"/>
<rect x="1" y="10" width="12" height="1" fill="#000080"/><rect x="2" y="11" width="11" height="1" fill="#000"/>
<g fill="#00ffff"><rect x="1" y="1" width="11" height="1"/><rect x="1" y="1" width="1" height="9"/></g>
<g fill="#fff"><rect x="2" y="1" width="1" height="1"/><rect x="4" y="1" width="1" height="1"/><rect x="6" y="1" width="1" height="1"/><rect x="8" y="1" width="1" height="1"/><rect x="10" y="1" width="1" height="1"/><rect x="1" y="3" width="1" height="1"/><rect x="1" y="5" width="1" height="1"/><rect x="1" y="7" width="1" height="1"/><rect x="1" y="9" width="1" height="1"/></g>
<rect x="3" y="2" width="8" height="3" fill="#000"/><rect x="4" y="3" width="6" height="1" fill="#fff"/>
<rect x="3" y="6" width="8" height="1" fill="#000"/><rect x="3" y="8" width="8" height="1" fill="#000"/>
<g fill="#fff"><rect x="4" y="6" width="1" height="1"/><rect x="6" y="6" width="1" height="1"/><rect x="8" y="6" width="1" height="1"/><rect x="10" y="6" width="1" height="1"/><rect x="4" y="8" width="1" height="1"/><rect x="6" y="8" width="1" height="1"/><rect x="8" y="8" width="1" height="1"/><rect x="10" y="8" width="1" height="1"/></g>
</svg>
<div class="t" style="right:47px;top:336.84px;font-size:12px;color:#000;">0,00</div>
<div class="t" style="left:775px;top:361.84px;font-size:12px;color:#000;">IPI Cred. 50%:</div>
<div class="b" style="left:870px;top:358px;width:118px;height:22px;background:#fff;box-shadow: inset 0 -1px 0 #8a8a8a, inset 0 1px 0 #ececec, inset 1px 0 0 #ececec, inset -1px 0 0 #ececec;"></div>
<div class="b" style="left:966px;top:358px;width:21px;height:20px;background:#fafafa;box-shadow: inset -1px -1px 0 #6a6a6a, inset -2px -2px 0 #a8a8a8, inset 1px 1px 0 #fff;"></div>
<svg width="14" height="12" viewBox="0 0 14 12" shape-rendering="crispEdges" style="position:absolute;left:969px;top:362px">
<rect x="1" y="0" width="11" height="1" fill="#008080"/>
<rect x="0" y="1" width="1" height="10" fill="#008080"/>
<rect x="1" y="1" width="12" height="10" fill="#008080"/>
<rect x="12" y="1" width="1" height="10" fill="#000080"/><rect x="13" y="2" width="1" height="9" fill="#000"/>
<rect x="1" y="10" width="12" height="1" fill="#000080"/><rect x="2" y="11" width="11" height="1" fill="#000"/>
<g fill="#00ffff"><rect x="1" y="1" width="11" height="1"/><rect x="1" y="1" width="1" height="9"/></g>
<g fill="#fff"><rect x="2" y="1" width="1" height="1"/><rect x="4" y="1" width="1" height="1"/><rect x="6" y="1" width="1" height="1"/><rect x="8" y="1" width="1" height="1"/><rect x="10" y="1" width="1" height="1"/><rect x="1" y="3" width="1" height="1"/><rect x="1" y="5" width="1" height="1"/><rect x="1" y="7" width="1" height="1"/><rect x="1" y="9" width="1" height="1"/></g>
<rect x="3" y="2" width="8" height="3" fill="#000"/><rect x="4" y="3" width="6" height="1" fill="#fff"/>
<rect x="3" y="6" width="8" height="1" fill="#000"/><rect x="3" y="8" width="8" height="1" fill="#000"/>
<g fill="#fff"><rect x="4" y="6" width="1" height="1"/><rect x="6" y="6" width="1" height="1"/><rect x="8" y="6" width="1" height="1"/><rect x="10" y="6" width="1" height="1"/><rect x="4" y="8" width="1" height="1"/><rect x="6" y="8" width="1" height="1"/><rect x="8" y="8" width="1" height="1"/><rect x="10" y="8" width="1" height="1"/></g>
</svg>
<div class="t" style="right:47px;top:361.84px;font-size:12px;color:#000;">0,00</div>
<div class="t" style="left:25px;top:418.84px;font-size:12px;color:#000;letter-spacing:0.15px">Base Cálculo</div>
<div class="b" style="left:168px;top:411px;width:121px;height:23px;background:#fff;border:1px solid #e6e6e6;box-sizing:border-box;border-radius:1px"></div>
<div class="t" style="right:726px;top:415.84px;font-size:12px;color:#858585;">R$ 0,00</div>
<div class="t" style="left:25px;top:444.84px;font-size:12px;color:#000;">Valor Total IBS</div>
<div class="b" style="left:168px;top:436px;width:121px;height:23px;background:#fff;border:1px solid #e6e6e6;box-sizing:border-box;border-radius:1px"></div>
<div class="t" style="right:726px;top:440.84px;font-size:12px;color:#858585;">R$ 0,00</div>
<div class="t" style="left:25px;top:470.84px;font-size:12px;color:#000;">Valor Total CBS</div>
<div class="b" style="left:168px;top:461px;width:121px;height:23px;background:#fff;border:1px solid #e6e6e6;box-sizing:border-box;border-radius:1px"></div>
<div class="t" style="right:726px;top:465.84px;font-size:12px;color:#858585;">R$ 0,00</div>
<div class="t" style="left:299px;top:421.84px;font-size:12px;color:#000;letter-spacing:-0.1px">Vlr.Tot IBS UF.</div>
<div class="b" style="left:421px;top:411px;width:121px;height:22px;background:#fff;border:1px solid #e6e6e6;box-sizing:border-box;border-radius:1px"></div>
<div class="t" style="right:473px;top:415.84px;font-size:12px;color:#858585;">R$ 0,00</div>
<div class="t" style="left:299px;top:442.84px;font-size:12px;color:#000;letter-spacing:-0.1px">Vlr.Tot Dif</div>
<div class="b" style="left:421px;top:436px;width:121px;height:22px;background:#fff;border:1px solid #e6e6e6;box-sizing:border-box;border-radius:1px"></div>
<div class="t" style="right:473px;top:440.84px;font-size:12px;color:#858585;">R$ 0,00</div>
<div class="t" style="left:299px;top:468.84px;font-size:12px;color:#000;letter-spacing:-0.1px">Vlr.Tot Dev</div>
<div class="b" style="left:421px;top:461px;width:121px;height:22px;background:#fff;border:1px solid #e6e6e6;box-sizing:border-box;border-radius:1px"></div>
<div class="t" style="right:473px;top:465.84px;font-size:12px;color:#858585;">R$ 0,00</div>
<div class="t" style="left:548.4px;top:417.84px;font-size:12px;color:#000;letter-spacing:-0.2px">Vlr.Tot IBS Mun.</div>
<div class="b" style="left:639px;top:410px;width:121px;height:22px;background:#fff;border:1px solid #e6e6e6;box-sizing:border-box;border-radius:1px"></div>
<div class="t" style="right:255px;top:414.84px;font-size:12px;color:#858585;">R$ 0,00</div>
<div class="t" style="left:548.4px;top:443.84px;font-size:12px;color:#000;letter-spacing:-0.2px">Vlr.Tot Dif</div>
<div class="b" style="left:639px;top:435px;width:121px;height:22px;background:#fff;border:1px solid #e6e6e6;box-sizing:border-box;border-radius:1px"></div>
<div class="t" style="right:255px;top:439.84px;font-size:12px;color:#858585;">R$ 0,00</div>
<div class="t" style="left:548.4px;top:469.84px;font-size:12px;color:#000;letter-spacing:-0.2px">Vlr.Tot Dev</div>
<div class="b" style="left:639px;top:460px;width:121px;height:22px;background:#fff;border:1px solid #e6e6e6;box-sizing:border-box;border-radius:1px"></div>
<div class="t" style="right:255px;top:464.84px;font-size:12px;color:#858585;">R$ 0,00</div>
<div class="t" style="left:22px;top:527.84px;font-size:12px;color:#000;">Vlr.Cred.Pres.IBS</div>
<div class="b" style="left:169px;top:523px;width:121px;height:22px;background:#fff;border:1px solid #e6e6e6;box-sizing:border-box;border-radius:1px"></div>
<div class="t" style="right:725px;top:527.84px;font-size:12px;color:#858585;">R$ 0,00</div>
<div class="t" style="left:22px;top:556.84px;font-size:12px;color:#000;">Vlr.Cred.Pres.CBS</div>
<div class="b" style="left:169px;top:550px;width:121px;height:22px;background:#fff;border:1px solid #e6e6e6;box-sizing:border-box;border-radius:1px"></div>
<div class="t" style="right:725px;top:554.84px;font-size:12px;color:#858585;">R$ 0,00</div>
<div class="t" style="left:295.5px;top:530.84px;font-size:12px;color:#000;letter-spacing:-0.1px">Vlr.Tot. IBS Mon.</div>
<div class="b" style="left:421px;top:523px;width:121px;height:22px;background:#fff;border:1px solid #e6e6e6;box-sizing:border-box;border-radius:1px"></div>
<div class="t" style="right:473px;top:527.84px;font-size:12px;color:#858585;">R$ 0,00</div>
<div class="t" style="left:295.5px;top:556.84px;font-size:12px;color:#000;letter-spacing:-0.1px">Vlr.Tot. IBS Mon.ret</div>
<div class="b" style="left:421px;top:548px;width:121px;height:22px;background:#fff;border:1px solid #e6e6e6;box-sizing:border-box;border-radius:1px"></div>
<div class="t" style="right:473px;top:552.84px;font-size:12px;color:#858585;">R$ 0,00</div>
<div class="t" style="left:295.5px;top:581.84px;font-size:12px;color:#000;letter-spacing:-0.1px">Vlr.Tot.IBS.Mon.ret ant</div>
<div class="b" style="left:421px;top:573px;width:121px;height:22px;background:#fff;border:1px solid #e6e6e6;box-sizing:border-box;border-radius:1px"></div>
<div class="t" style="right:473px;top:577.84px;font-size:12px;color:#858585;">R$ 0,00</div>
<div class="t" style="left:295.5px;top:607.84px;font-size:12px;color:#000;letter-spacing:-0.1px">Vlr.Tot. CBS Mon.</div>
<div class="b" style="left:421px;top:598px;width:121px;height:22px;background:#fff;border:1px solid #e6e6e6;box-sizing:border-box;border-radius:1px"></div>
<div class="t" style="right:473px;top:602.84px;font-size:12px;color:#858585;">R$ 0,00</div>
<div class="t" style="left:295.5px;top:632.84px;font-size:12px;color:#000;letter-spacing:-0.1px">Vlr.Tot. CBS Mon.ret</div>
<div class="b" style="left:421px;top:623px;width:121px;height:22px;background:#fff;border:1px solid #e6e6e6;box-sizing:border-box;border-radius:1px"></div>
<div class="t" style="right:473px;top:627.84px;font-size:12px;color:#858585;">R$ 0,00</div>
<div class="t" style="left:295.5px;top:657.84px;font-size:12px;color:#000;letter-spacing:-0.1px">Vlr.Tot. CBS.Mon.ret ant</div>
<div class="b" style="left:421px;top:648px;width:121px;height:22px;background:#fff;border:1px solid #e6e6e6;box-sizing:border-box;border-radius:1px"></div>
<div class="t" style="right:473px;top:652.84px;font-size:12px;color:#858585;">R$ 0,00</div>
<div class="t" style="left:550px;top:527.84px;font-size:12px;color:#000;">Vlr.Tot Dif.</div>
<div class="b" style="left:640px;top:522px;width:121px;height:22px;background:#fff;border:1px solid #e6e6e6;box-sizing:border-box;border-radius:1px"></div>
<div class="t" style="right:254px;top:526.84px;font-size:12px;color:#858585;">R$ 0,00</div>
<div class="t" style="left:550px;top:553.84px;font-size:12px;color:#000;">Vlr.Tot Dev</div>
<div class="b" style="left:640px;top:547px;width:121px;height:22px;background:#fff;border:1px solid #e6e6e6;box-sizing:border-box;border-radius:1px"></div>
<div class="t" style="right:254px;top:551.84px;font-size:12px;color:#858585;">R$ 0,00</div>
<div class="t" style="left:770px;top:530.84px;font-size:12px;color:#000;">Valor IS</div>
<div class="b" style="left:867px;top:522px;width:121px;height:22px;background:#fff;border:1px solid #e6e6e6;box-sizing:border-box;border-radius:1px"></div>
<div class="t" style="right:27px;top:526.84px;font-size:12px;color:#858585;">R$ 0,00</div>
<div class="b" style="left:9px;top:683px;width:21px;height:22px;background:#f9f9f9;border:1px solid #ececea;border-radius:3px;"></div>
<div class="b" style="left:34px;top:683px;width:21px;height:22px;background:#f9f9f9;border:1px solid #ececea;border-radius:3px;"></div>
<div class="b" style="left:59px;top:683px;width:21px;height:22px;background:#f9f9f9;border:1px solid #ececea;border-radius:3px;"></div>
<div class="b" style="left:84px;top:683px;width:21px;height:22px;background:#f9f9f9;border:1px solid #ececea;border-radius:3px;"></div>
<div class="b" style="left:245px;top:683px;width:21px;height:22px;background:#f9f9f9;border:1px solid #ececea;border-radius:3px;"></div>
<div class="t" style="left:113px;top:684.84px;font-size:12px;color:#000;">Nº NF:</div>
<div class="b" style="left:152px;top:683px;width:86px;height:21px;background:#fff;"></div>
<div class="b" style="left:486px;top:683px;width:71px;height:22px;background:#f8f8f8;border:1px solid #eaeae6;border-radius:3px;"></div>
<div class="t" style="left:518.3px;top:690.11px;font-size:10.5px;color:#9a9aa6;"><u>I</u>ncluir</div>
<div class="b" style="left:566px;top:683px;width:87px;height:22px;background:#fdfdfd;border:1px solid #d0d0d0;border-radius:3px;"></div>
<div class="t" style="left:596.6px;top:690.11px;font-size:10.5px;color:#000;">C<u>o</u>nfirmar</div>
<div class="b" style="left:659px;top:683px;width:83px;height:22px;background:#fdfdfd;border:1px solid #d0d0d0;border-radius:3px;"></div>
<div class="t" style="left:689.3px;top:690.11px;font-size:10.5px;color:#000;">Ca<u>n</u>celar</div>
<div class="b" style="left:751px;top:683px;width:74px;height:22px;background:#f8f8f8;border:1px solid #eaeae6;border-radius:3px;"></div>
<div class="t" style="left:782px;top:690.11px;font-size:10.5px;color:#9a9aa6;"><u>A</u>lterar</div>
<div class="b" style="left:832px;top:683px;width:73px;height:22px;background:#f8f8f8;border:1px solid #eaeae6;border-radius:3px;"></div>
<div class="t" style="left:863px;top:690.11px;font-size:10.5px;color:#9a9aa6;">E<u>x</u>cluir</div>
<div class="b" style="left:914px;top:683px;width:82px;height:22px;background:#f8f8f8;border:1px solid #eaeae6;border-radius:3px;"></div>
<div class="t" style="left:942.3px;top:690.11px;font-size:10.5px;color:#9a9aa6;"><u>E</u>xibir Log</div>
<div class="b" style="left:914px;top:711px;width:82px;height:21px;background:#f8f8f8;border:1px solid #eaeae6;border-radius:3px;"></div>
<div class="t" style="left:948px;top:717.11px;font-size:10.5px;color:#9a9aa6;"><u>F</u>echar</div>
<svg width="20" height="18" viewBox="0 0 20 18" style="position:absolute;left:574px;top:685px"><path d="M3.3 11.2 L6.8 14.5 L17.2 3.6" fill="none" stroke="#1f5a5b" stroke-width="3.4" stroke-linecap="butt" stroke-linejoin="miter"/><path d="M3.0 10.6 L6.8 14.0 L16.8 3.3" fill="none" stroke="#3f8a8b" stroke-width="2.2" stroke-linecap="butt" stroke-linejoin="miter"/></svg>
<svg width="16" height="17" viewBox="0 0 16 17" style="position:absolute;left:668px;top:685px"><path d="M3.8 4.0 L14 14.2 M3 15.4 L14.6 2.6" fill="none" stroke="#1f5a5b" stroke-width="3.6" stroke-linecap="butt"/><path d="M3.8 4.0 L14 14.2 M3 15.4 L14.6 2.6" fill="none" stroke="#468687" stroke-width="2.2" stroke-linecap="butt"/></svg>
<div class="b" style="left:2px;top:708px;width:912px;height:32px;border:3px solid #ff0000;border-radius:2px;"></div>
<div class="t" style="left:7px;top:715.84px;font-size:12px;color:#000;">Analise atual:</div>
<div class="b" style="left:87px;top:711px;width:819px;height:21px;background:#fff;border:1px solid #8c8c8c;border-radius:2px;"></div>
<div class="b" style="left:90px;top:714px;width:796px;height:15px;background:#ff2a2a;"></div>
<div class="t" style="left:91px;top:715.84px;font-size:12px;color:#000;letter-spacing:0.08px">(152) O Valor Contábil diverge do total calculado</div>
<svg width="10" height="6" viewBox="0 0 10 6" style="position:absolute;left:892px;top:719px"><path d="M0.7 0.7 L5 5 L9.3 0.7" fill="none" stroke="#3a3a3a" stroke-width="1.1"/></svg>
</body></html>
